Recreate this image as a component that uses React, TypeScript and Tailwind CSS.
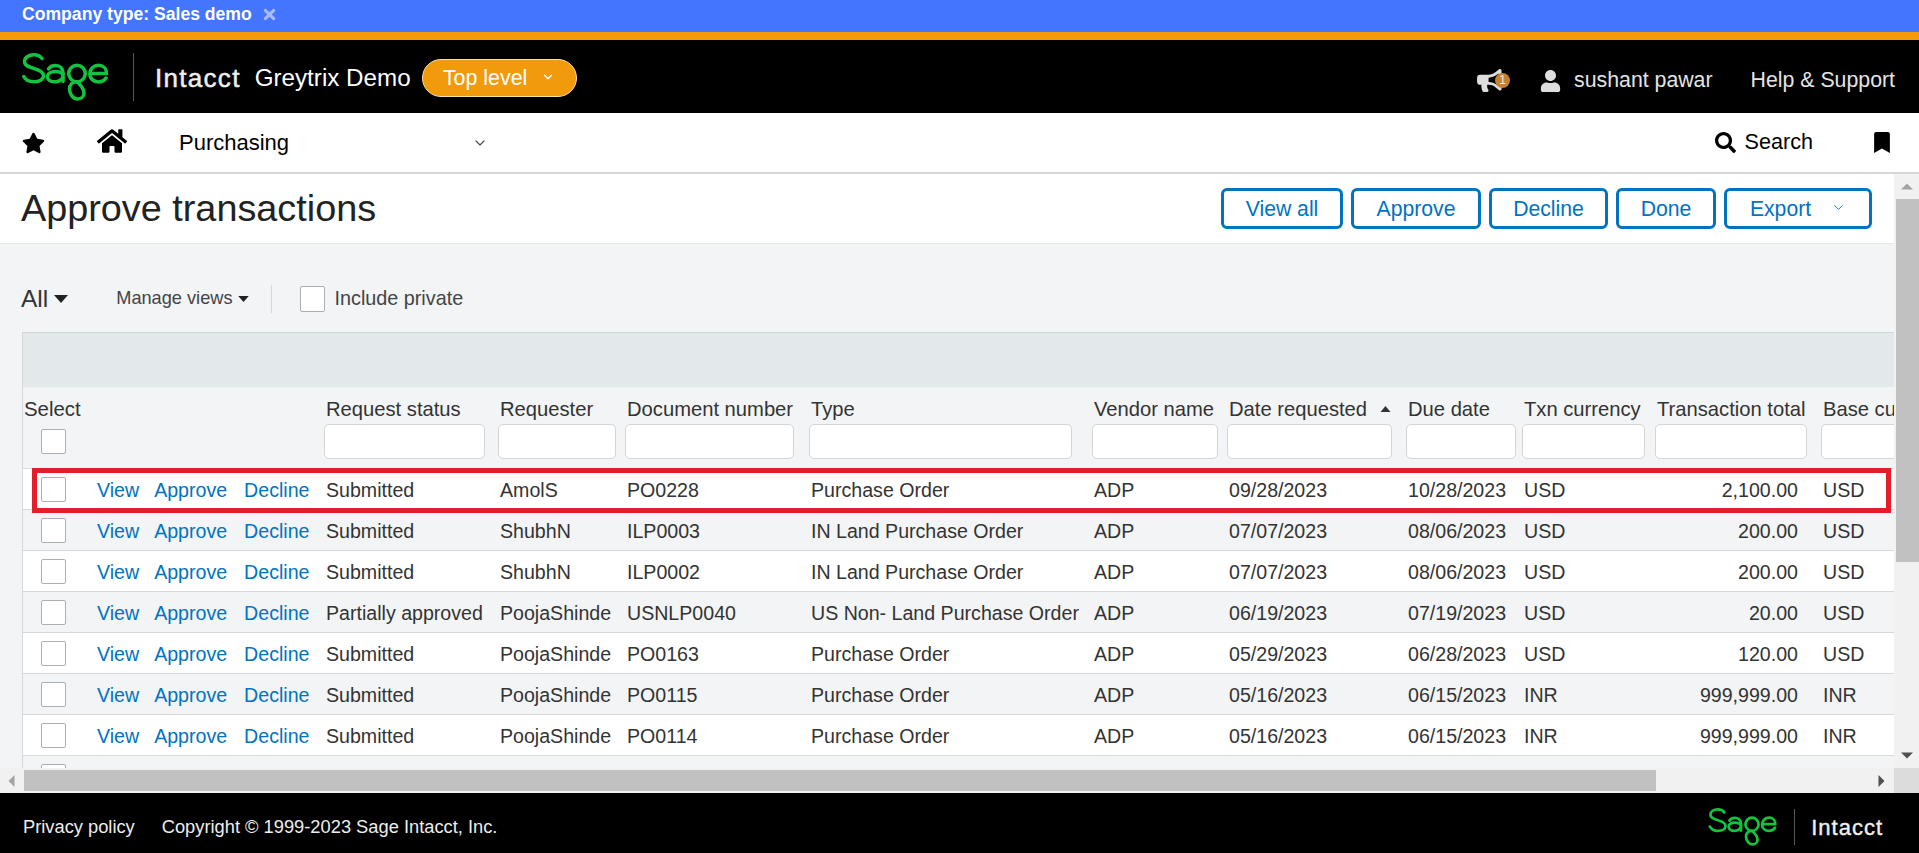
import React from "react";
import { FaStar, FaHome, FaSearch, FaBookmark, FaUser, FaBullhorn, FaTimes } from "react-icons/fa";
import { ChevronDown } from "lucide-react";

function SageLogo({ className }: { className: string }) {
  return (
    <svg viewBox="0 0 86 48" className={className} fill="none" stroke="#12c43f" strokeWidth="3.5" strokeLinecap="round" strokeLinejoin="round">
      <path d="M20 5.5C18 2.8 15 1.8 12 1.8 6.5 1.8 2.5 4.7 2.5 8.6c0 4 4 5.4 9.5 6.9 5.5 1.5 9.5 3.3 9.5 7.1 0 4-4.5 6.2-9.5 6.2-5 0-8.5-2-10.2-5.3" />
      <path d="M26.5 16c1.5-2.5 4-3.5 7-3.5 4.5 0 7.5 3 7.5 7.5v8.5" />
      <path d="M41 21c-2-2-5-2.5-7.5-2.5-4.500 0-8 2-8 5.200 0 3.300 3.500 5.100 7.500 5.100 3.500 0 6.500-1.800 8-4.800" />
      <path d="M55 12.300c-4.600 0-8.300 3.700-8.300 8.250S50.400 28.800 55 28.800s8.300-3.700 8.300-8.250S59.600 12.300 55 12.300Z" />
      <path d="M55 28.800c-5 0-7.500 3.200-7.500 7.200 0 5 3.500 10 8 10 3.500 0 6.500-2.500 6.500-6 0-4-3.500-8-7-11.200" />
      <path d="M68 20.500h16.500c0-5-3.500-8.200-8-8.200-5 0-8.700 3.700-8.700 8.400 0 4.800 3.700 8.200 8.700 8.200 3.300 0 6-1.400 7.500-3.900" />
    </svg>
  );
}

const cols = [299, 174, 127, 184, 283, 135, 179, 116, 133, 166, 171];
const heads: { t: string; w: number; sort?: boolean }[] = [
  { t: "Request status", w: 161 },
  { t: "Requester", w: 118 },
  { t: "Document number", w: 169 },
  { t: "Type", w: 263 },
  { t: "Vendor name", w: 126 },
  { t: "Date requested", w: 165, sort: true },
  { t: "Due date", w: 110 },
  { t: "Txn currency", w: 123 },
  { t: "Transaction total", w: 152 },
  { t: "Base currency", w: 200 },
];
const rows = [
  ["Submitted", "AmolS", "PO0228", "Purchase Order", "ADP", "09/28/2023", "10/28/2023", "USD", "2,100.00", "USD"],
  ["Submitted", "ShubhN", "ILP0003", "IN Land Purchase Order", "ADP", "07/07/2023", "08/06/2023", "USD", "200.00", "USD"],
  ["Submitted", "ShubhN", "ILP0002", "IN Land Purchase Order", "ADP", "07/07/2023", "08/06/2023", "USD", "200.00", "USD"],
  ["Partially approved", "PoojaShinde", "USNLP0040", "US Non- Land Purchase Order", "ADP", "06/19/2023", "07/19/2023", "USD", "20.00", "USD"],
  ["Submitted", "PoojaShinde", "PO0163", "Purchase Order", "ADP", "05/29/2023", "06/28/2023", "USD", "120.00", "USD"],
  ["Submitted", "PoojaShinde", "PO0115", "Purchase Order", "ADP", "05/16/2023", "06/15/2023", "INR", "999,999.00", "INR"],
  ["Submitted", "PoojaShinde", "PO0114", "Purchase Order", "ADP", "05/16/2023", "06/15/2023", "INR", "999,999.00", "INR"],
];

function Btn({ w, label, chev }: { w: string; label: string; chev?: boolean }) {
  return (
    <div className={`${w} h-[41px] border-[3px] border-[#0073c1] rounded-[6px] bg-white flex items-center justify-center text-[21.2px] text-[#0073c1]`}>
      <span>{label}</span>
      {chev && <ChevronDown className="w-[15px] h-[15px] ml-[20px] mt-[-3px]" strokeWidth={1.5} />}
    </div>
  );
}

function Box({ h = "h-[25px]" }: { h?: string }) {
  return <div className={`w-[25px] ${h} bg-white border border-[#a9afb3] rounded-[2px]`} />;
}

export default function App() {
  return (
    <div className="w-[1919px] h-[853px] overflow-hidden flex flex-col bg-white text-[#333] font-['Liberation_Sans',Arial,sans-serif]">
      <div className="h-[32px] shrink-0 bg-[#4475fe] flex items-center pl-[22px] pb-[4px] text-white font-bold text-[17.6px]">
        <span>Company type: Sales demo</span>
        <FaTimes className="ml-[9px] w-[17px] h-[17px] text-[#a6bcfd]" />
      </div>
      <div className="h-[8px] shrink-0 bg-[#f59b0a]" />
      <header className="h-[73px] shrink-0 bg-black flex items-center text-white">
        <SageLogo className="ml-[22px] w-[86px] h-[48px]" />
        <div className="w-px h-[48px] bg-[#555] ml-[25px]" />
        <span className="ml-[21px] mt-[4px] text-[26px] tracking-[1.3px] text-[#eee] [-webkit-text-stroke:0.5px]">Intacct</span>
        <span className="ml-[14px] mt-[4px] text-[24.2px]">Greytrix Demo</span>
        <div className="ml-[11px] mt-[3px] w-[155px] h-[38px] rounded-full bg-[#f09a0c] border border-[#fde0a8] flex items-center justify-center text-[21.4px]">
          <span>Top level</span>
          <ChevronDown className="w-[14px] h-[14px] ml-[14px] mt-[-3px]" strokeWidth={2.5} />
        </div>
        <div className="ml-auto mt-[8px] flex items-center text-[21.3px] text-[#e4e4e4] mr-[24px]">
          <div className="relative w-[35px] h-[23px]">
            <FaBullhorn className="w-[30px] h-[23px] text-[#dedede]" />
            <span className="absolute right-0 top-[4px] w-[15px] h-[15px] rounded-full bg-[#c8802a] text-[12px] leading-[15px] text-center text-[#eee]">1</span>
          </div>
          <FaUser className="ml-[29px] w-[23px] h-[22px] text-[#dedede]" />
          <span className="ml-[12px]">sushant pawar</span>
          <span className="ml-[38px]">Help &amp; Support</span>
        </div>
      </header>
      <nav className="h-[61px] shrink-0 bg-white border-b-2 border-[#d5d8da] flex items-center text-black">
        <FaStar className="ml-[22px] w-[23px] h-[22px]" />
        <FaHome className="ml-[52px] w-[30px] h-[30px] mt-[-4px]" />
        <span className="ml-[52px] text-[22px]">Purchasing</span>
        <ChevronDown className="ml-[183px] w-[16px] h-[16px] text-[#444]" strokeWidth={1.6} />
        <FaSearch className="ml-auto w-[21px] h-[21px]" />
        <span className="ml-[9px] text-[21.6px]">Search</span>
        <FaBookmark className="ml-[61px] mr-[29px] w-[16px] h-[21px]" />
      </nav>
      <div className="flex-1 min-h-0 flex">
        <main className="w-[1894px] flex flex-col bg-[#f2f4f5]">
          <div className="h-[70px] shrink-0 bg-white border-b border-[#e6e9eb] flex items-center">
            <h1 className="ml-[21px] text-[37.8px] text-[#222]">Approve transactions</h1>
            <div className="ml-auto mr-[22px] flex gap-[8px]">
              <Btn w="w-[122px]" label="View all" />
              <Btn w="w-[130px]" label="Approve" />
              <Btn w="w-[119px]" label="Decline" />
              <Btn w="w-[100px]" label="Done" />
              <Btn w="w-[148px]" label="Export" chev />
            </div>
          </div>
          <div className="h-[88px] shrink-0 flex items-center pl-[21px] pt-[22px]">
            <span className="text-[24.5px]">All</span>
            <svg viewBox="0 0 14 8" className="ml-[6px] w-[14px] h-[8px] fill-[#222]"><path d="M0 0h14L7 8z" /></svg>
            <span className="ml-[48px] text-[18.2px] text-[#444]">Manage views</span>
            <svg viewBox="0 0 14 8" className="ml-[5px] w-[11px] h-[6px] fill-[#222]"><path d="M0 0h14L7 8z" /></svg>
            <div className="ml-[22px] w-px h-[28px] bg-[#d5d8da]" />
            <div className="ml-[28px]"><Box h="h-[26px]" /></div>
            <span className="ml-[10px] text-[19.8px] text-[#444]">Include private</span>
          </div>
          <div className="flex-1 min-h-0 ml-[22px] relative overflow-hidden border-l border-[#d5d8da]">
            <div className="h-[55px] bg-[#e3e8ea] border-t border-[#d0d5d8]" />
            <table className="table-fixed border-collapse w-[1967px] text-[19.6px] leading-none">
              <colgroup>
                {cols.map((w, i) => (
                  <col key={i} style={{ width: w }} />
                ))}
              </colgroup>
              <thead>
                <tr className="h-[81px] border-b border-[#d9dcde]">
                  <th className="font-normal text-left align-top pl-[1px] pt-[12px] text-[20.4px]">
                    <div className="whitespace-nowrap h-[20px]">Select</div>
                    <div className="ml-[17px] mt-[10px]"><Box /></div>
                  </th>
                  {heads.map((h) => (
                    <th key={h.t} className="font-normal text-left align-top pt-[12px] pl-[2px] text-[20.2px]">
                      <div className="pl-[2px] whitespace-nowrap flex items-center h-[20px]">
                        {h.t}
                        {h.sort && <svg viewBox="0 0 10 6" className="ml-[13px] w-[11px] h-[6px] fill-[#333]"><path d="M0 6h10L5 0z" /></svg>}
                      </div>
                      <div className="mt-[5px] h-[35px] bg-white border border-[#d2d6d9] rounded-[5px]" style={{ width: h.w }} />
                    </th>
                  ))}
                </tr>
              </thead>
              <tbody>
                {rows.map((r, i) => (
                  <tr key={i} className={`h-[41px] border-b border-[#d5d8da] ${i % 2 === 0 ? "bg-white" : "bg-[#f2f4f5]"}`}>
                    <td className="align-middle">
                      <div className="flex items-center">
                        <div className="ml-[18px] mt-[1px]"><Box /></div>
                        <span className="ml-[31px] pt-[4px] text-[#0073c1]">View</span>
                        <span className="ml-[15px] pt-[4px] text-[#0073c1]">Approve</span>
                        <span className="ml-[17px] pt-[4px] text-[#0073c1]">Decline</span>
                      </div>
                    </td>
                    {r.map((c, j) => (
                      <td key={j} className={`whitespace-nowrap pt-[4px] ${j === 8 ? "text-right pr-[21px]" : "pl-[4px]"}`}>
                        {c}
                      </td>
                    ))}
                  </tr>
                ))}
                <tr className="h-[41px] bg-[#f2f4f5]">
                  <td className="align-middle">
                    <div className="ml-[18px] mt-[1px]"><Box /></div>
                  </td>
                  <td colSpan={10} />
                </tr>
              </tbody>
            </table>
            <div className="absolute left-[9px] top-[136px] w-[1859px] h-[45px] border-[5px] border-[#e51c2a] pointer-events-none" />
          </div>
          <div className="h-[25px] shrink-0 bg-[#f1f1f1] flex items-center">
            <svg viewBox="0 0 6 12" className="ml-[8px] w-[7px] h-[12px] fill-[#a3a3a3]"><path d="M6 0v12L0 6z" /></svg>
            <div className="ml-[9px] w-[1632px] h-[21px] bg-[#c1c1c1]" />
            <svg viewBox="0 0 6 12" className="ml-auto mr-[9px] w-[7px] h-[12px] fill-[#505050]"><path d="M0 0v12l6-6z" /></svg>
          </div>
        </main>
        <aside className="w-[25px] flex flex-col bg-[#f1f1f1]">
          <svg viewBox="0 0 12 6" className="mt-[9px] ml-[7px] w-[12px] h-[7px] fill-[#a3a3a3]"><path d="M0 6h12L6 0z" /></svg>
          <div className="mt-[9px] ml-[2px] w-[23px] h-[363px] bg-[#c1c1c1]" />
          <svg viewBox="0 0 12 6" className="mt-auto mb-[9px] ml-[7px] w-[12px] h-[7px] fill-[#505050]"><path d="M0 0h12L6 6z" /></svg>
          <div className="h-[25px] shrink-0 bg-[#dcdcdc]" />
        </aside>
      </div>
      <footer className="h-[60px] shrink-0 bg-black flex items-center pt-[8px] text-[18.3px] text-[#eee]">
        <span className="ml-[23px]">Privacy policy</span>
        <span className="ml-[27px]">Copyright © 1999-2023 Sage Intacct, Inc.</span>
        <SageLogo className="ml-auto w-[69px] h-[38px]" />
        <div className="ml-[17px] w-px h-[36px] bg-[#555]" />
        <span className="ml-[16px] mr-[36px] text-[22px] tracking-[1px] [-webkit-text-stroke:0.4px]">Intacct</span>
      </footer>
    </div>
  );
}
